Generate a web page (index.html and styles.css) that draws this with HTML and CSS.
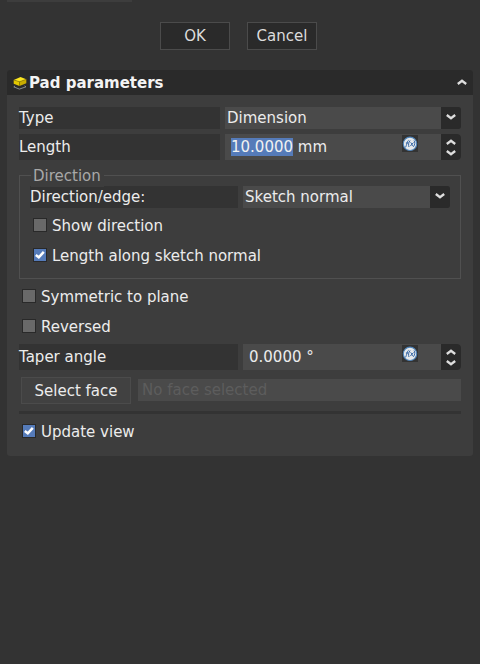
FILE: index.html
```html
<!DOCTYPE html>
<html lang="en">
<head>
<meta charset="utf-8">
<title>Pad parameters</title>
<link rel="stylesheet" href="styles.css">
</head>
<body>
<svg class="defs" width="0" height="0">
  <symbol id="down" viewBox="0 0 10 6"><path d="M.8 1 5 4.2 9.2 1" fill="none" stroke="#dedede" stroke-width="2.3"/></symbol>
  <symbol id="up" viewBox="0 0 10 6"><path d="M.8 5 5 1.8 9.2 5" fill="none" stroke="#dedede" stroke-width="2.3"/></symbol>
  <symbol id="tick" viewBox="0 0 12 12"><path d="M1.8 6 4.8 8.3 9.8 2.9" fill="none" stroke="#fff" stroke-width="2.5"/></symbol>
  <symbol id="fx" viewBox="0 0 16 17">
    <circle cx="8" cy="8.8" r="6.7" fill="#e6e9eb" stroke="#4f84ba" stroke-width="1.1"/>
    <path d="M3 12.2C4.6 12.8 4.7 6 6.6 5.3M3.9 8h2.5M8.1 5.5C6.4 7.5 6.2 10 7 12M8.5 7.5c1.7 0 1.1 3.8 2.8 3.4M11.5 7.5 8.3 11.1M12 5.5c1.3 1.7 1 4.4-.6 6.3" fill="none" stroke="#3465a4" stroke-width="1"/>
  </symbol>
</svg>
<div class="top-strip"></div>
<div class="actions">
  <button class="action">OK</button>
  <button class="action">Cancel</button>
</div>
<section class="panel">
  <header class="head">
    <svg class="pad-icon" viewBox="0 0 14 14">
      <path d="M2 10 .8 10.9 6.4 13.1 13 10.8 11.5 9.8" fill="none" stroke="#92969a" stroke-width=".9"/>
      <path d="M.7 3.9 6.5 5.7v4.4L.7 7.8z" fill="#e3c800"/>
      <path d="M6.5 5.7 13.3 3.3v3.9L6.5 10.1z" fill="#c9ad00"/>
      <path d="M.7 3.9 7.5 .9l5.8 2.4L6.5 5.7z" fill="#fbe620"/>
      <path d="M.7 3.9 6.5 5.7l6.8-2.4M6.5 5.7v4" fill="none" stroke="#7b6a00" stroke-width=".5"/>
    </svg>
    <h1>Pad parameters</h1>
    <svg class="chev"><use href="#up"/></svg>
  </header>
  <div class="body">
    <div class="row">
      <span class="label">Type</span>
      <div class="field"><span class="value">Dimension</span><span class="side"><svg class="chev"><use href="#down"/></svg></span></div>
    </div>
    <div class="row spin length">
      <span class="label">Length</span>
      <div class="field"><span class="value"><mark>10.0000</mark> mm</span><svg class="fx"><use href="#fx"/></svg><span class="side"><svg class="chev"><use href="#up"/></svg><svg class="chev"><use href="#down"/></svg></span></div>
    </div>
    <div class="group">
      <span class="legend">Direction</span>
      <div class="row wide">
        <span class="label">Direction/edge:</span>
        <div class="field"><span class="value">Sketch normal</span><span class="side"><svg class="chev"><use href="#down"/></svg></span></div>
      </div>
      <div class="check"><span class="box"></span>Show direction</div>
      <div class="check"><span class="box on"><svg><use href="#tick"/></svg></span>Length along sketch normal</div>
    </div>
    <div class="check"><span class="box"></span>Symmetric to plane</div>
    <div class="check"><span class="box"></span>Reversed</div>
    <div class="row spin wide taper">
      <span class="label">Taper angle</span>
      <div class="field"><span class="value">0.0000 °</span><svg class="fx"><use href="#fx"/></svg><span class="side"><svg class="chev"><use href="#up"/></svg><svg class="chev"><use href="#down"/></svg></span></div>
    </div>
    <div class="face">
      <button class="select">Select face</button>
      <div class="face-name">No face selected</div>
    </div>
    <div class="rule"></div>
    <div class="check"><span class="box on"><svg><use href="#tick"/></svg></span>Update view</div>
  </div>
</section>
</body>
</html>
```

FILE: styles.css
```css
* { box-sizing: border-box; }
body {
  margin: 0;
  height: 664px;
  overflow: hidden;
  background: #333;
  color: #ececec;
  font: 15px/22px "DejaVu Sans", sans-serif;
  white-space: nowrap;
}
svg { display: block; flex: none; }
.defs { position: absolute; }
.top-strip { width: 125px; height: 2px; margin-left: 7px; background: #3d3d3d; }
.actions { display: flex; gap: 17px; margin: 20px 0 20px 160px; }
.action {
  width: 70px;
  height: 28px;
  padding: 0;
  border: 1px solid #4b4b4b;
  background: #2a2a2a;
  color: #dcdcdc;
  font: inherit;
}
.panel { margin: 0 7px; height: 386px; border-radius: 3px; background: #3d3d3d; overflow: hidden; }
.head {
  display: flex;
  align-items: center;
  height: 25px;
  padding: 0 6px 0 6px;
  background: #2a2a2a;
}
.head h1 { flex: 1; margin: 0 0 0 2px; padding-top: 2px; font-size: 15px; line-height: 25px; color: #f4f4f4; }
.pad-icon { width: 14px; height: 14px; }
.chev { width: 10px; height: 6px; }
.head .chev { margin-bottom: 2px; }
.body { padding: 12px 12px 0; }
.row { display: grid; grid-template-columns: 201px 1fr; gap: 5px; height: 22px; }
.row.wide { grid-template-columns: 219px 1fr; }
.group .row.wide { grid-template-columns: 208px 1fr; }
.label { background: #333; }
.field { display: flex; background: #4a4a4a; border-radius: 0 2px 2px 0; overflow: hidden; }
.value { flex: 1; padding-left: 2px; }
.side {
  display: flex;
  flex-direction: column;
  align-items: center;
  justify-content: center;
  gap: 5px;
  width: 20px;
  padding-right: 1px;
  padding-bottom: 2px;
  background: #2a2a2a;
}
.spin { height: 26px; line-height: 26px; }
.spin .field { border-radius: 0 4px 4px 0; }
.spin .side { padding: 0 1px 0 0; }
.length { margin-top: 5px; }
.spin .value { padding-left: 6px; }
mark { display: inline-block; height: 18px; line-height: 18px; background: #557bb9; color: #f1f1f1; }
.fx { width: 16px; height: 17px; margin: 1px 23px 0 0; background: #333; }
.group {
  position: relative;
  height: 104px;
  margin: 15px 0 3px;
  padding: 10px 10px 0;
  border: 1px solid #505050;
}
.legend { position: absolute; left: 11px; top: -11px; padding: 0 3px 0 2px; background: #3d3d3d; color: #a8a8a8; }
.check { display: flex; align-items: center; gap: 5px; height: 30px; padding-left: 3px; }
.group .check:nth-of-type(2) { margin-top: 3px; }
.box { width: 14px; height: 14px; margin-bottom: 2px; border: 1px solid #292929; background: #696969; }
.box.on { background: #557bb9; }
.box svg { width: 12px; height: 12px; }
.taper { margin-top: 2px; }
.face { display: flex; gap: 7px; margin: 7px 0 7px 2px; height: 27px; }
.select {
  width: 110px;
  height: 27px;
  padding: 0;
  border: 1px solid #4b4b4b;
  background: #414141;
  color: #ececec;
  font: inherit;
}
.face-name { flex: 1; height: 22px; margin-top: 2px; padding-left: 4px; background: #4a4a4a; color: #5d5d5d; }
.rule { height: 3px; margin-bottom: 3px; background: #333; }
```
